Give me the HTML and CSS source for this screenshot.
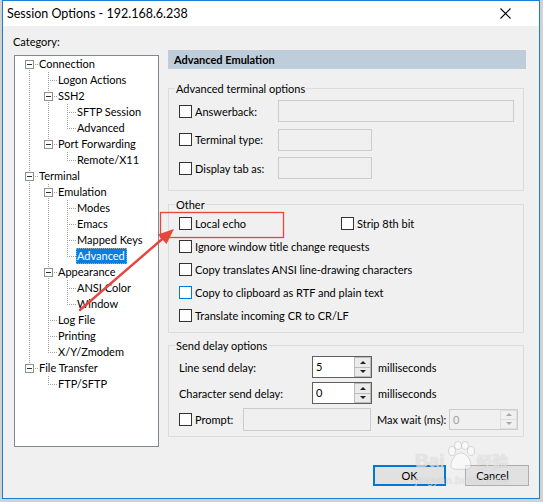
FILE: index.html
```html
<!DOCTYPE html>
<html>
<head>
<meta charset="utf-8">
<title>Session Options</title>
<link rel="stylesheet" href="styles.css">
</head>
<body>
<div class="window">
  <div class="titlebar">
    <span class="title">Session Options - 192.168.6.238</span>
    <svg class="close" width="11" height="11" viewBox="0 0 11 11"><path d="M0.5 0.5L10.5 10.5M10.5 0.5L0.5 10.5" stroke="#000" stroke-width="1.1" fill="none"/></svg>
  </div>
  <div class="content">
    <div class="left">
      <div class="cat-label">Category:</div>
      <div class="tree">
        <div class="tr"><span class="c r"><span class="box"></span></span><span class="tx">Connection</span></div>
        <div class="tr"><span class="c v"></span><span class="c te"></span><span class="tx">Logon Actions</span></div>
        <div class="tr"><span class="c v"></span><span class="c te"><span class="box"></span></span><span class="tx">SSH2</span></div>
        <div class="tr"><span class="c v"></span><span class="c v"></span><span class="c te"></span><span class="tx">SFTP Session</span></div>
        <div class="tr"><span class="c v"></span><span class="c v"></span><span class="c l"></span><span class="tx">Advanced</span></div>
        <div class="tr"><span class="c v"></span><span class="c l"><span class="box"></span></span><span class="tx">Port Forwarding</span></div>
        <div class="tr"><span class="c v"></span><span class="c"></span><span class="c l"></span><span class="tx">Remote/X11</span></div>
        <div class="tr"><span class="c te"><span class="box"></span></span><span class="tx">Terminal</span></div>
        <div class="tr"><span class="c v"></span><span class="c te"><span class="box"></span></span><span class="tx">Emulation</span></div>
        <div class="tr"><span class="c v"></span><span class="c v"></span><span class="c te"></span><span class="tx">Modes</span></div>
        <div class="tr"><span class="c v"></span><span class="c v"></span><span class="c te"></span><span class="tx">Emacs</span></div>
        <div class="tr"><span class="c v"></span><span class="c v"></span><span class="c te"></span><span class="tx">Mapped Keys</span></div>
        <div class="tr"><span class="c v"></span><span class="c v"></span><span class="c l"></span><span class="tx sel">Advanced</span></div>
        <div class="tr"><span class="c v"></span><span class="c te"><span class="box"></span></span><span class="tx">Appearance</span></div>
        <div class="tr"><span class="c v"></span><span class="c v"></span><span class="c te"></span><span class="tx">ANSI Color</span></div>
        <div class="tr"><span class="c v"></span><span class="c v"></span><span class="c l"></span><span class="tx">Window</span></div>
        <div class="tr"><span class="c v"></span><span class="c te"></span><span class="tx">Log File</span></div>
        <div class="tr"><span class="c v"></span><span class="c te"></span><span class="tx">Printing</span></div>
        <div class="tr"><span class="c v"></span><span class="c l"></span><span class="tx">X/Y/Zmodem</span></div>
        <div class="tr"><span class="c l"><span class="box"></span></span><span class="tx">File Transfer</span></div>
        <div class="tr"><span class="c"></span><span class="c l"></span><span class="tx">FTP/SFTP</span></div>
      </div>
    </div>
    <div class="right">
      <div class="header">Advanced Emulation</div>

      <fieldset class="group g1">
        <legend>Advanced terminal options</legend>
        <div class="rows rows1">
          <div class="row"><span class="cb"></span><span class="lbl w-term">Answerback:</span><span class="edit dis w-ans"></span></div>
          <div class="row"><span class="cb"></span><span class="lbl w-term">Terminal type:</span><span class="edit dis w-short"></span></div>
          <div class="row"><span class="cb"></span><span class="lbl w-term">Display tab as:</span><span class="edit dis w-short"></span></div>
        </div>
      </fieldset>

      <fieldset class="group g2">
        <legend>Other</legend>
        <div class="rows rows2">
          <div class="row r23"><span class="pair"><span class="cb"></span><span class="lbl">Local echo</span></span><span class="cb"></span><span class="lbl">Strip 8th bit</span></div>
          <div class="row r23"><span class="cb"></span><span class="lbl">Ignore window title change requests</span></div>
          <div class="row r23"><span class="cb"></span><span class="lbl">Copy translates ANSI line-drawing characters</span></div>
          <div class="row r23"><span class="cb hover"></span><span class="lbl">Copy to clipboard as RTF and plain text</span></div>
          <div class="row r23"><span class="cb"></span><span class="lbl">Translate incoming CR to CR/LF</span></div>
        </div>
      </fieldset>

      <fieldset class="group g3">
        <legend>Send delay options</legend>
        <div class="rows rows3">
          <div class="row"><span class="dlbl">Line send delay:</span><span class="spin"><span class="val">5</span><span class="arrows"><span class="arr up"></span><span class="arr dn"></span></span></span><span class="unit">milliseconds</span></div>
          <div class="row"><span class="dlbl">Character send delay:</span><span class="spin"><span class="val">0</span><span class="arrows"><span class="arr up"></span><span class="arr dn"></span></span></span><span class="unit">milliseconds</span></div>
          <div class="row"><span class="cb"></span><span class="lbl w-prompt">Prompt:</span><span class="edit dis w-prompt-in"></span><span class="unit w-max">Max wait (ms):</span><span class="spin spin-dis"><span class="val">0</span><span class="arrows"><span class="arr up"></span><span class="arr dn"></span></span></span></div>
        </div>
      </fieldset>

      <div class="buttons">
        <button class="btn ok">OK</button>
        <button class="btn cancel">Cancel</button>
      </div>
    </div>
  </div>
</div>

<svg class="annot" width="543" height="502" viewBox="0 0 543 502">
  <rect x="160.5" y="212.5" width="123" height="25" fill="none" stroke="#e8453c" stroke-width="1.3"/>
  <line x1="80" y1="310" x2="164" y2="237.5" stroke="#e8453c" stroke-width="2.4" stroke-linecap="round"/>
  <polygon points="174,229 166.5,244 158,234.5" fill="#e8453c"/>
</svg>

<div class="watermark">
  <div class="wm-top">
    <span class="wm-bai">Bai</span>
    <span class="wm-paw">
      <svg width="32" height="30" viewBox="0 0 32 30">
        <g fill="rgba(255,255,255,0.55)" stroke="rgba(140,140,140,0.35)" stroke-width="0.8">
          <ellipse cx="7" cy="10" rx="3.5" ry="4.5"/>
          <ellipse cx="13" cy="4.5" rx="3.5" ry="4"/>
          <ellipse cx="20" cy="4.5" rx="3.5" ry="4"/>
          <ellipse cx="26" cy="10" rx="3.5" ry="4.5"/>
          <path d="M16 12 C10 12 6 20 6 24 C6 28 10 29 16 28 C22 29 26 28 26 24 C26 20 22 12 16 12 Z"/>
        </g>
      </svg>
    </span>
    <span class="wm-cn">经验</span>
  </div>
  <div class="wm-url">jingyan.baidu.com</div>
</div>
</body>
</html>
```

FILE: styles.css
```css
html, body {
  margin: 0;
  padding: 0;
}

body {
  width: 543px;
  height: 502px;
  overflow: hidden;
  position: relative;
  background: #d2d2d2;
  font-family: Lato, "Liberation Sans", "Noto Sans CJK SC", sans-serif;
  font-size: 11px;
  color: #000;
}

.window {
  box-sizing: border-box;
  width: 538px;
  height: 499px;
  margin-left: 2px;
  border: 1px solid #1a7fd4;
  background: #f0f0f0;
  display: flex;
  flex-direction: column;
}

.titlebar {
  flex: none;
  height: 25px;
  background: #fff;
  display: flex;
  align-items: center;
  justify-content: space-between;
  padding: 0 28px 0 4px;
}

.title {
  font-size: 12.5px;
  line-height: 18px;
}

.close {
  display: block;
}

.content {
  flex: 1;
  display: flex;
  align-items: flex-start;
  gap: 9px;
  padding: 8px 13px 0 10px;
}

.left {
  flex: none;
  width: 146px;
}

.cat-label {
  line-height: 15px;
}

.tree {
  box-sizing: border-box;
  width: 145px;
  height: 392px;
  margin: 6px 0 0 1px;
  border: 1px solid #828790;
  background: #fff;
  padding: 0 0 0 4px;
}

.tr {
  display: flex;
  height: 16px;
}

.c {
  flex: none;
  width: 19px;
  height: 16px;
  display: flex;
  align-items: center;
}

.v {
  background: repeating-linear-gradient(to bottom, #a0a0a0 0 1px, transparent 1px 2px) 10px 0 / 1px 16px no-repeat;
}

.te {
  background:
    repeating-linear-gradient(to bottom, #a0a0a0 0 1px, transparent 1px 2px) 10px 0 / 1px 16px no-repeat,
    repeating-linear-gradient(to right, #a0a0a0 0 1px, transparent 1px 2px) 12px 8px / 7px 1px no-repeat;
}

.l {
  background:
    repeating-linear-gradient(to bottom, #a0a0a0 0 1px, transparent 1px 2px) 10px 0 / 1px 9px no-repeat,
    repeating-linear-gradient(to right, #a0a0a0 0 1px, transparent 1px 2px) 12px 8px / 7px 1px no-repeat;
}

.r {
  background:
    repeating-linear-gradient(to bottom, #a0a0a0 0 1px, transparent 1px 2px) 10px 8px / 1px 8px no-repeat,
    repeating-linear-gradient(to right, #a0a0a0 0 1px, transparent 1px 2px) 12px 8px / 7px 1px no-repeat;
}

.box {
  box-sizing: border-box;
  width: 9px;
  height: 9px;
  margin-left: 6px;
  border: 1px solid #8e8f8f;
  background: #fff;
  display: flex;
  align-items: center;
  justify-content: center;
}

.box::after {
  content: "";
  width: 5px;
  height: 1px;
  background: #233;
}

.tx {
  line-height: 16px;
  padding: 0 2px 0 1px;
  white-space: nowrap;
}

.tx.sel {
  background: #0a7ee0;
  color: #fff;
  outline: 1px dotted #e0a050;
  outline-offset: -1px;
}

.right {
  flex: none;
  width: 358px;
  margin-top: 16px;
}

.header {
  height: 19px;
  line-height: 19px;
  padding-left: 6px;
  font-weight: bold;
  background: #bfcddb;
}

.group {
  margin: 0 2px 0 0;
  padding: 0;
  border: 1px solid #dcdcdc;
  min-inline-size: 0;
}

.group legend {
  padding: 0 1px;
  margin-left: 6px;
  line-height: 15px;
}

.g1 { margin-top: 12px; }
.g2 { margin-top: 6px; }
.g3 { margin-top: 5px; }

.rows {
  display: flex;
  flex-direction: column;
  padding-left: 10px;
}

.rows1 {
  padding-top: 4px;
  padding-bottom: 11px;
  gap: 6.5px;
}

.rows2 {
  padding-top: 0;
  padding-bottom: 5px;
}

.rows3 {
  padding-top: 3px;
  padding-bottom: 6px;
  gap: 4px;
}

.row {
  display: flex;
  align-items: center;
  height: 22px;
  white-space: nowrap;
}

.row.r23 {
  height: 23px;
}

.pair {
  display: flex;
  align-items: center;
  width: 162px;
}

.cb {
  flex: none;
  box-sizing: border-box;
  width: 13px;
  height: 13px;
  border: 1px solid #333;
  background: #fff;
}

.cb.hover {
  border-color: #0078d7;
}

.lbl {
  margin-left: 3px;
}

.w-term { width: 83px; }
.w-prompt { width: 48px; }

.edit {
  box-sizing: border-box;
  height: 22px;
  border: 1px solid #cccccc;
  background: #f0f0f0;
}

.w-ans { width: 236px; }
.w-short { width: 94px; }
.w-prompt-in { width: 128px; height: 23px; }

.dlbl {
  width: 133px;
}

.spin {
  box-sizing: border-box;
  display: flex;
  width: 60px;
  height: 22px;
  border: 1px solid #5f5f5f;
  background: #fff;
}

.spin .val {
  flex: 1;
  padding-left: 3px;
  line-height: 20px;
}

.arrows {
  flex: none;
  width: 17px;
  display: flex;
  flex-direction: column;
}

.arr {
  flex: 1;
  box-sizing: border-box;
  border: 1px solid #bcbcbc;
  background: #ebebeb;
  display: flex;
  align-items: center;
  justify-content: center;
}

.arr.dn {
  border-top: none;
}

.arr::after {
  content: "";
  width: 0;
  height: 0;
  border-left: 3px solid transparent;
  border-right: 3px solid transparent;
}

.arr.up::after {
  border-bottom: 3px solid #222;
}

.arr.dn::after {
  border-top: 3px solid #222;
}

.unit {
  margin-left: 6px;
}

.w-max {
  width: 72px;
}

.spin-dis {
  width: 69px;
  height: 21px;
  border-color: #cccccc;
  background: #f0f0f0;
  color: #a0a0a0;
}

.spin-dis .val {
  line-height: 19px;
}

.spin-dis .arr {
  border-color: #dedede;
  background: #f0f0f0;
}

.spin-dis .arr.up::after {
  border-bottom-color: #a8a8a8;
}

.spin-dis .arr.dn::after {
  border-top-color: #a8a8a8;
}

.buttons {
  display: flex;
  justify-content: flex-end;
  gap: 19px;
  margin-top: 28px;
  margin-right: -3px;
}

.btn {
  box-sizing: border-box;
  height: 21px;
  margin: 0;
  padding: 0;
  font-family: inherit;
  font-size: 11px;
  color: #000;
  background: #e1e1e1;
  border: 1px solid #adadad;
}

.btn.ok {
  width: 73px;
  border: 2px solid #0078d7;
}

.btn.cancel {
  width: 64px;
  padding-right: 9px;
}

.annot {
  position: absolute;
  left: 0;
  top: 0;
  pointer-events: none;
}

.watermark {
  position: absolute;
  left: 415px;
  top: 440px;
  color: rgba(255, 255, 255, 0.6);
  text-shadow: 0 0 1px rgba(110, 110, 110, 0.4);
  pointer-events: none;
}

.wm-top {
  display: flex;
  align-items: flex-end;
  height: 31px;
}

.wm-bai {
  font-family: "Liberation Sans", sans-serif;
  font-weight: bold;
  font-size: 19px;
  line-height: 20px;
}

.wm-paw {
  display: flex;
  justify-content: center;
  width: 32px;
  height: 30px;
}

.wm-paw svg {
  display: block;
}

.wm-cn {
  font-family: "Noto Sans CJK SC", sans-serif;
  font-weight: bold;
  font-size: 16px;
  line-height: 20px;
}

.wm-url {
  font-family: "Liberation Sans", sans-serif;
  font-size: 11px;
  line-height: 12px;
  letter-spacing: 0.3px;
  margin-top: 3px;
}
```
